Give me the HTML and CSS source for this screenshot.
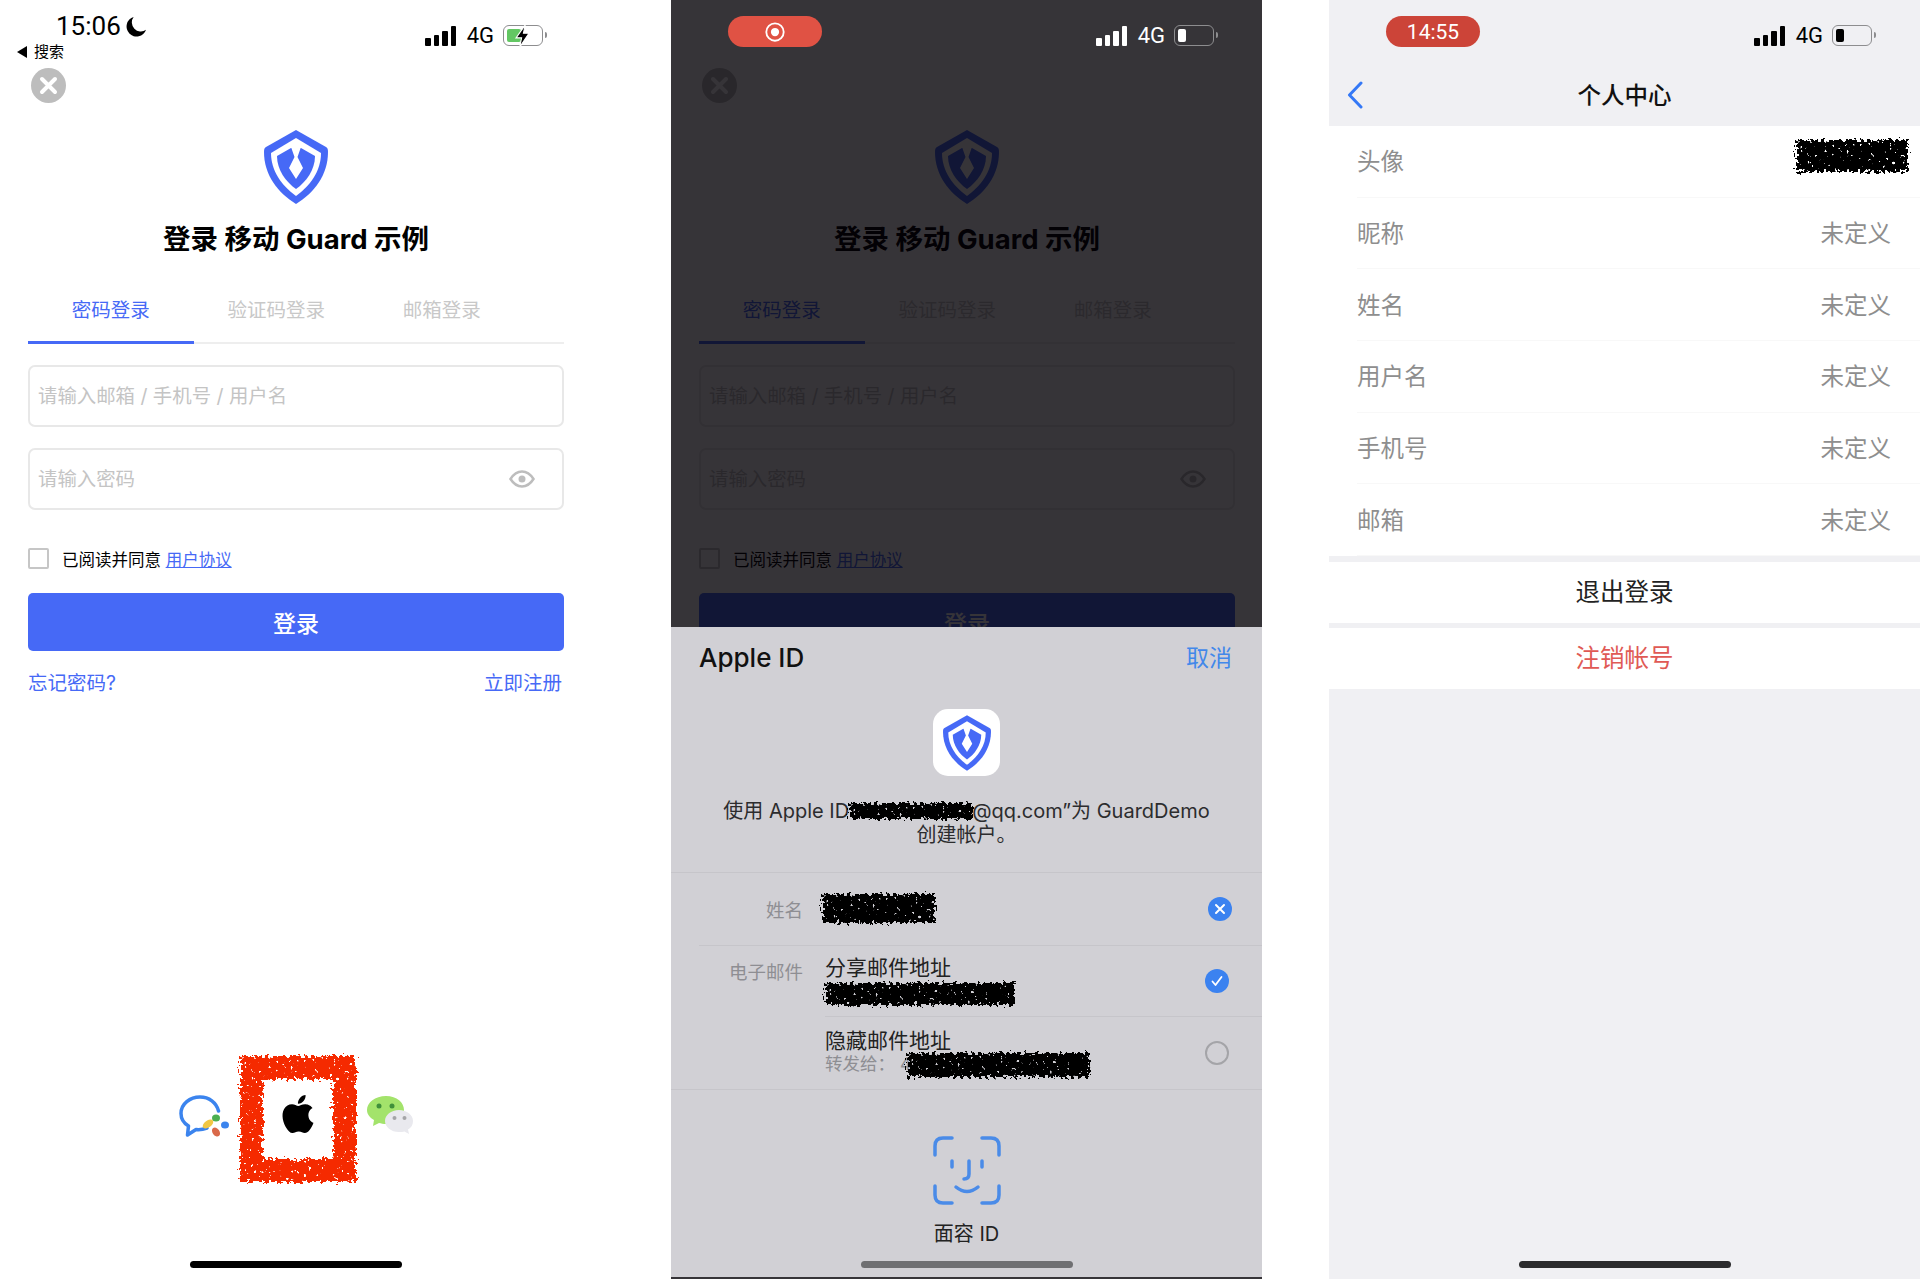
FILE: index.html
```html
<!DOCTYPE html>
<html lang="zh-CN">
<head>
    <meta charset="UTF-8">
    <meta name="viewport" content="width=device-width, initial-scale=1.0">
    <title>移动 Guard 示例</title>
    <link rel="stylesheet" href="styles.css">
</head>
<body>
    <!-- shared drawings -->
    <svg class="defs" width="0" height="0" aria-hidden="true">
        <defs>
            <filter id="scribble" x="-12%" y="-12%" width="124%" height="124%" color-interpolation-filters="sRGB">
                <feTurbulence type="fractalNoise" baseFrequency=".28" numOctaves="2" seed="4" result="noise"/>
                <feDisplacementMap in="SourceGraphic" in2="noise" scale="11" xChannelSelector="R" yChannelSelector="G" result="rough"/>
                <feColorMatrix in="noise" type="matrix" values="0 0 0 0 0  0 0 0 0 0  0 0 0 0 0  0 0 0 -16 5" result="holes"/>
                <feComposite in="rough" in2="holes" operator="out"/>
            </filter>
            <symbol id="shield" viewBox="0 0 64 74">
                <path fill="#4669f6" d="M32 0L62 17C63.500 18 64 19 64 22C64 45 50 63 32 74C14 63 0 45 0 22C0 19 .5 18 2 17Z"/>
                <path fill="#fff" d="M32 8L57 23C57 41 46 56 32 66C18 56 7 41 7 23Z"/>
                <path fill="#4669f6" d="M27 18L13 26C13 40 22 52 32 59C42 52 51 40 51 26L37 18Z"/>
                <path fill="#fff" d="M27 17L32 14L37 17L33.500 27L39 38L32 49L25 38L30.500 27Z"/>
            </symbol>
        </defs>
    </svg>

    <main class="board">
        <!-- login page -->
        <section class="phone">
            <div class="status">
                <div class="status-left">
                    <div class="clock">
                        <span>15:06</span>
                        <svg class="moon" viewBox="0 0 22 22"><path fill="#000" d="M8 1A10.500 10.500 0 1 0 21 14.500A9.500 9.500 0 0 1 8 1Z"/></svg>
                    </div>
                    <div class="back-app"><i class="back-arrow"></i>搜索</div>
                </div>
                <div class="status-right">
                    <div class="signal"><i></i><i></i><i></i><i></i></div>
                    <span class="network">4G</span>
                    <div class="battery">
                        <i class="battery-level battery-charging"></i>
                        <svg class="bolt" viewBox="0 0 18 26"><path fill="#000" stroke="#fff" stroke-width="1.200" d="M12 1L2 15H8L6 25L16 10H10Z"/></svg>
                    </div>
                </div>
            </div>
            <div class="login">
                <svg class="close" viewBox="0 0 35 35"><circle cx="17.500" cy="17.500" r="17.500" fill="#bdbdbd"/><path stroke="#fff" stroke-width="4" stroke-linecap="round" d="M11 11L24 24M24 11L11 24"/></svg>
                <svg class="logo"><use href="#shield"/></svg>
                <h1 class="title">登录 移动 Guard 示例</h1>
                <div class="tabs">
                    <span class="tab tab-active">密码登录</span>
                    <span class="tab">验证码登录</span>
                    <span class="tab">邮箱登录</span>
                </div>
                <div class="input-box"><input type="text" placeholder="请输入邮箱 / 手机号 / 用户名"></div>
                <div class="input-box">
                    <input type="password" placeholder="请输入密码">
                    <svg class="eye" viewBox="0 0 26 18"><path fill="none" stroke="#bdbdbd" stroke-width="2.500" d="M1.500 9C5 3.500 9 1.500 13 1.500S21 3.500 24.500 9C21 14.500 17 16.500 13 16.500S5 14.500 1.500 9Z"/><circle cx="13" cy="9" r="3.500" fill="#bdbdbd"/></svg>
                </div>
                <div class="agree"><i class="check"></i><span>已阅读并同意 <a href="#">用户协议</a></span></div>
                <button class="submit">登录</button>
                <div class="links"><a href="#">忘记密码?</a><a href="#">立即注册</a></div>
                <div class="social">
                    <svg class="wecom" viewBox="0 0 51 42">
                        <path fill="none" stroke="#3b84ee" stroke-width="3.500" stroke-linecap="round" stroke-linejoin="round" d="M28 33C24 34.500 21 35 17 34.500L8.500 40L9.500 31C4.500 28 2 23.500 2 18.500C2 9 11 2 21 2C30 2 37.500 7.500 39.500 16"/>
                        <ellipse cx="37" cy="23" rx="4" ry="3.500" fill="#4caf50"/>
                        <ellipse cx="29" cy="29" rx="3.500" ry="6" fill="#f2c744" transform="rotate(55 29 29)"/>
                        <ellipse cx="46" cy="30" rx="4" ry="3.500" fill="#3b84ee"/>
                        <ellipse cx="37" cy="37" rx="3.500" ry="5" fill="#d9694a" transform="rotate(-35 37 37)"/>
                    </svg>
                    <div class="apple-frame">
                        <div class="frame-paint"></div>
                        <svg class="apple" viewBox="0 0 24 24"><path fill="#000" d="M12.152 6.896c-.948 0-2.415-1.078-3.960-1.040-2.040.027-3.910 1.183-4.961 3.014-2.117 3.675-.546 9.103 1.519 12.090 1.013 1.454 2.208 3.090 3.792 3.039 1.520-.065 2.090-.987 3.935-.987 1.831 0 2.350.987 3.960.948 1.637-.026 2.676-1.480 3.676-2.948 1.156-1.688 1.636-3.325 1.662-3.415-.039-.013-3.182-1.221-3.220-4.857-.026-3.040 2.480-4.494 2.597-4.559-1.429-2.090-3.623-2.324-4.390-2.376-2-.156-3.675 1.090-4.610 1.090zM15.530 3.830c.843-1.012 1.400-2.427 1.245-3.830-1.207.052-2.662.805-3.532 1.818-.780.896-1.454 2.338-1.273 3.714 1.338.104 2.715-.688 3.559-1.701"/></svg>
                    </div>
                    <svg class="wechat" viewBox="0 0 48 40">
                        <path fill="#a3e36b" d="M20 1C31 1 38 7.500 38 15C38 22.500 31 29 20 29C17.500 29 15 28.500 13 28L7 31L8 25C3.500 22.500 1 19 1 15C1 7.500 9 1 20 1Z"/>
                        <circle cx="13" cy="11" r="2.500" fill="#3f8f3a"/><circle cx="26" cy="11" r="2.500" fill="#3f8f3a"/>
                        <path fill="#e9e9ee" d="M33 15C41 15 47 20 47 26C47 30 45 33 42 34.500L43 39L38.500 36.500C37 37 35 37 33 37C25 37 19 32 19 26C19 20 25 15 33 15Z"/>
                        <circle cx="28.500" cy="23" r="2" fill="#a5a5a8"/><circle cx="38.500" cy="23" r="2" fill="#a5a5a8"/>
                    </svg>
                </div>
            </div>
            <div class="home-bar"></div>
        </section>

        <!-- apple id sheet on top of the login page -->
        <section class="phone phone-sheet">
            <div class="status status-over">
                <div class="pill pill-record">
                    <svg class="record" viewBox="0 0 24 24"><circle cx="12" cy="12" r="9.500" fill="none" stroke="#fff" stroke-width="2"/><circle cx="12" cy="12" r="4.500" fill="#fff"/></svg>
                </div>
                <div class="status-right">
                    <div class="signal"><i></i><i></i><i></i><i></i></div>
                    <span class="network">4G</span>
                    <div class="battery"><i class="battery-level"></i></div>
                </div>
            </div>
            <div class="login">
                <svg class="close" viewBox="0 0 35 35"><circle cx="17.500" cy="17.500" r="17.500" fill="#bdbdbd"/><path stroke="#fff" stroke-width="4" stroke-linecap="round" d="M11 11L24 24M24 11L11 24"/></svg>
                <svg class="logo"><use href="#shield"/></svg>
                <h1 class="title">登录 移动 Guard 示例</h1>
                <div class="tabs">
                    <span class="tab tab-active">密码登录</span>
                    <span class="tab">验证码登录</span>
                    <span class="tab">邮箱登录</span>
                </div>
                <div class="input-box"><input type="text" placeholder="请输入邮箱 / 手机号 / 用户名"></div>
                <div class="input-box">
                    <input type="password" placeholder="请输入密码">
                    <svg class="eye" viewBox="0 0 26 18"><path fill="none" stroke="#bdbdbd" stroke-width="2.500" d="M1.500 9C5 3.500 9 1.500 13 1.500S21 3.500 24.500 9C21 14.500 17 16.500 13 16.500S5 14.500 1.500 9Z"/><circle cx="13" cy="9" r="3.500" fill="#bdbdbd"/></svg>
                </div>
                <div class="agree"><i class="check"></i><span>已阅读并同意 <a href="#">用户协议</a></span></div>
                <button class="submit">登录</button>
            </div>
            <div class="scrim"></div>
            <div class="sheet">
                <div class="sheet-head">
                    <span class="sheet-title">Apple ID</span>
                    <span class="sheet-cancel">取消</span>
                </div>
                <div class="app-icon"><svg class="app-shield"><use href="#shield"/></svg></div>
                <p class="sheet-text">使用 Apple ID<span class="scrawl scrawl-mail"></span>@qq.com”为 GuardDemo<br>创建帐户。</p>
                <div class="fields">
                    <div class="field field-name">
                        <span class="field-label">姓名</span>
                        <div class="option">
                            <span class="scrawl scrawl-name"></span>
                            <svg class="mark mark-x" viewBox="0 0 24 24"><circle cx="12" cy="12" r="12" fill="#3b82f0"/><path stroke="#fff" stroke-width="2" stroke-linecap="round" d="M8 8L16 16M16 8L8 16"/></svg>
                        </div>
                    </div>
                    <div class="field">
                        <span class="field-label field-label-top">电子邮件</span>
                        <div class="field-options">
                            <div class="option option-line">
                                <div class="option-text">
                                    <span class="option-title">分享邮件地址</span>
                                    <span class="scrawl scrawl-share"></span>
                                </div>
                                <svg class="mark" viewBox="0 0 24 24"><circle cx="12" cy="12" r="12" fill="#3b82f0"/><path fill="none" stroke="#fff" stroke-width="1.800" stroke-linecap="round" stroke-linejoin="round" d="M7.500 12.500L10.500 16L16.500 8"/></svg>
                            </div>
                            <div class="option">
                                <div class="option-text">
                                    <span class="option-title">隐藏邮件地址</span>
                                    <span class="option-sub">转发给： 4<span class="scrawl scrawl-hide"></span></span>
                                </div>
                                <i class="mark mark-empty"></i>
                            </div>
                        </div>
                    </div>
                </div>
                <div class="face">
                    <svg class="face-icon" viewBox="0 0 68 69"><g fill="none" stroke="#4a8be8" stroke-width="3.500" stroke-linecap="round"><path d="M2 19V10Q2 2 10 2H19M49 2H58Q66 2 66 10V19M2 50V59Q2 67 10 67H19M66 50V59Q66 67 58 67H49"/><path d="M19 25V31M49 25V31M36 25V38Q36 43 31 43M23 51Q34 60 45 51"/></g></svg>
                    <span class="face-label">面容 ID</span>
                </div>
                <div class="home-bar home-bar-grey"></div>
            </div>
        </section>

        <!-- profile page -->
        <section class="phone phone-profile">
            <div class="status">
                <div class="pill pill-time">14:55</div>
                <div class="status-right">
                    <div class="signal"><i></i><i></i><i></i><i></i></div>
                    <span class="network">4G</span>
                    <div class="battery"><i class="battery-level"></i></div>
                </div>
            </div>
            <div class="navbar">
                <svg class="chevron" viewBox="0 0 16 28"><path fill="none" stroke="#3478f6" stroke-width="3" stroke-linecap="round" stroke-linejoin="round" d="M14 2L2.500 14L14 26"/></svg>
                <span class="navbar-title">个人中心</span>
            </div>
            <ul class="profile-list">
                <li class="profile-row"><span>头像</span><span class="scrawl scrawl-avatar"></span></li>
                <li class="profile-row"><span>昵称</span><span>未定义</span></li>
                <li class="profile-row"><span>姓名</span><span>未定义</span></li>
                <li class="profile-row"><span>用户名</span><span>未定义</span></li>
                <li class="profile-row"><span>手机号</span><span>未定义</span></li>
                <li class="profile-row"><span>邮箱</span><span>未定义</span></li>
            </ul>
            <div class="profile-action">退出登录</div>
            <div class="profile-action profile-danger">注销帐号</div>
            <div class="home-bar home-bar-dark"></div>
        </section>
    </main>
</body>
</html>
```

FILE: styles.css
```css
* {
    box-sizing: border-box;
}
body {
    margin: 0;
    background-color: #fff;
    font-family: Inter, 'Noto Sans CJK SC', sans-serif;
    color: #000;
}
a {
    color: #4669f6;
    text-decoration: none;
}
.defs {
    position: absolute;
}
.board {
    display: flex;
    width: 1920px;
    height: 1279px;
    overflow: hidden;
}
.phone {
    position: relative;
    display: flex;
    flex-direction: column;
    flex: 0 0 591px;
    height: 1279px;
    overflow: hidden;
    background-color: #fff;
}
.phone-sheet {
    margin-left: 80px;
}
.phone-profile {
    margin-left: 67px;
    background-color: #f0f0f3;
}

/* status bar */
.status {
    display: flex;
    justify-content: space-between;
    align-items: flex-start;
    flex: 0 0 68px;
    padding-right: 45px;
}
.status-over {
    position: relative;
    z-index: 2;
    color: #fff;
}
.status-left {
    padding: 11px 0 0 17px;
}
.clock {
    display: flex;
    align-items: center;
    gap: 5px;
    height: 30px;
    padding-left: 39px;
    font-size: 26px;
    font-family: Roboto, sans-serif;
}
.moon {
    width: 21px;
    height: 21px;
}
.back-app {
    display: flex;
    align-items: center;
    gap: 7px;
    margin-top: 1px;
    font-size: 15px;
    line-height: 20px;
}
.back-arrow {
    border-right: 10px solid #000;
    border-top: 6px solid transparent;
    border-bottom: 6px solid transparent;
}
.status-right {
    display: flex;
    align-items: center;
    gap: 9px;
    margin-top: 25px;
    height: 21px;
}
.signal {
    display: flex;
    align-items: flex-end;
    gap: 3px;
    height: 20px;
    margin-right: 1.500px;
    color: inherit;
}
.signal i {
    width: 5.500px;
    background-color: currentColor;
    border-radius: 1px;
}
.signal i:nth-child(1) { height: 8px; }
.signal i:nth-child(2) { height: 11px; }
.signal i:nth-child(3) { height: 15px; }
.signal i:nth-child(4) { height: 20px; }
.network {
    font-family: Roboto, sans-serif;
    font-size: 22px;
    line-height: 21px;
}
.battery {
    position: relative;
    width: 40px;
    height: 21px;
    margin-right: 3px;
    padding: 3px;
    border: 1.500px solid #8d8d8f;
    border-radius: 6px;
}
.battery::after {
    content: '';
    position: absolute;
    top: 6px;
    right: -4.500px;
    width: 2px;
    height: 6px;
    background-color: #8d8d8f;
    border-radius: 0 2px 2px 0;
}
.battery-level {
    display: block;
    width: 8px;
    height: 100%;
    background-color: currentColor;
    border-radius: 2px;
}
.battery-charging {
    width: 14px;
    background-color: #63c763;
}
.bolt {
    position: absolute;
    top: -2.500px;
    left: 10px;
    width: 17px;
    height: 24px;
}
.pill {
    display: flex;
    align-items: center;
    justify-content: center;
    width: 94px;
    height: 31px;
    margin-top: 16px;
    margin-left: 57px;
    border-radius: 16px;
    color: #fff;
}
.pill-record {
    background-color: #e05244;
}
.pill-time {
    background-color: #cc4438;
    font-size: 21px;
    font-family: Roboto, sans-serif;
}
.record {
    width: 22px;
    height: 22px;
}

/* login form */
.login {
    display: flex;
    flex-direction: column;
    flex: 1;
    padding: 0 27px 97px 28px;
}
.close {
    width: 35px;
    height: 35px;
    margin-left: 3px;
    flex: none;
}
.logo {
    align-self: center;
    flex: none;
    width: 64px;
    height: 74px;
    margin-top: 27px;
}
.title {
    margin: 15px 0 0;
    text-align: center;
    font-size: 27.500px;
    line-height: 40px;
    font-weight: 700;
}
.tabs {
    display: flex;
    margin-top: 17px;
    border-bottom: 2px solid #eeeeee;
}
.tab {
    width: 165.500px;
    height: 68px;
    margin-bottom: -2px;
    text-align: center;
    font-size: 19.500px;
    line-height: 68px;
    color: #c8c8c8;
}
.tab-active {
    color: #4669f6;
    border-bottom: 3px solid #4669f6;
}
.input-box {
    display: flex;
    align-items: center;
    height: 62px;
    margin-top: 21px;
    padding: 0 27px 0 8px;
    border: 2px solid #e8e8e8;
    border-radius: 7px;
}
.input-box:first-of-type {
    margin-top: 22px;
}
.input-box input {
    flex: 1;
    border: none;
    outline: none;
    padding: 0;
    background: transparent;
    font-family: inherit;
    font-size: 19.400px;
}
.input-box input::placeholder {
    color: #c4c4c4;
}
.eye {
    width: 26px;
    height: 18px;
}
.agree {
    display: flex;
    align-items: center;
    gap: 13px;
    margin-top: 38px;
    height: 21px;
    font-size: 16.500px;
}
.agree a {
    text-decoration: underline;
}
.check {
    width: 21px;
    height: 21px;
    border: 2.500px solid #c6c6c6;
    border-radius: 2px;
}
.submit {
    flex: none;
    height: 58px;
    margin-top: 23.500px;
    border: none;
    border-radius: 5px;
    background-color: #4669f6;
    color: #fff;
    font-family: inherit;
    font-size: 23px;
    font-weight: 500;
}
.links {
    display: flex;
    justify-content: space-between;
    margin-top: 18px;
    padding-right: 2px;
    font-size: 19.500px;
    line-height: 28px;
}
.social {
    display: flex;
    align-items: center;
    justify-content: center;
    gap: 10px;
    margin-top: auto;
}
.wecom {
    width: 51px;
    height: 42px;
    margin-bottom: 6px;
}
.apple-frame {
    position: relative;
    display: flex;
    align-items: center;
    justify-content: center;
    width: 116px;
    height: 126px;
}
.frame-paint {
    position: absolute;
    inset: 0;
    border: 23px solid #f52a00;
    filter: url(#scribble);
}
.apple {
    width: 38px;
    height: 42px;
    margin-bottom: 10px;
}
.wechat {
    width: 48px;
    height: 40px;
    margin-bottom: 8px;
}
.home-bar {
    position: absolute;
    left: 190px;
    bottom: 11px;
    width: 212px;
    height: 7px;
    border-radius: 4px;
    background-color: #000;
}
.home-bar-grey {
    bottom: 9px;
    background-color: #6f6f72;
}
.home-bar-dark {
    background-color: #2c2c2e;
}

/* apple id sheet */
.scrim {
    position: absolute;
    inset: 0;
    z-index: 1;
    background-color: rgba(4, 1, 6, .8);
}
.sheet {
    position: absolute;
    top: 627px;
    left: 0;
    right: 0;
    z-index: 2;
    height: 650px;
    background-color: #d1d0d5;
    color: #222;
}
.sheet-head {
    display: flex;
    justify-content: space-between;
    align-items: center;
    height: 60px;
    padding: 0 30px 0 28px;
}
.sheet-title {
    font-size: 26px;
    font-weight: 500;
    color: #111;
}
.sheet-cancel {
    padding-bottom: 2px;
    font-size: 23px;
    color: #4288ea;
}
.app-icon {
    display: flex;
    align-items: center;
    justify-content: center;
    width: 67px;
    height: 67px;
    margin: 22px auto 0;
    border-radius: 15px;
    background-color: #fff;
}
.app-shield {
    width: 48px;
    height: 56px;
}
.sheet-text {
    margin: 23px 0 25px;
    text-align: center;
    font-size: 20px;
    line-height: 24px;
    color: #2c2c2e;
}
.scrawl {
    display: inline-block;
    background-color: #000;
    filter: url(#scribble);
}
.scrawl-mail {
    width: 123px;
    height: 16px;
    vertical-align: -1px;
}
.fields {
    border-top: 1px solid #c6c5ca;
    border-bottom: 1px solid #c6c5ca;
}
.field {
    display: flex;
    margin-left: 28px;
    font-size: 18.500px;
}
.field-name {
    border-bottom: 1px solid #c6c5ca;
}
.field-label {
    flex: 0 0 104px;
    align-self: center;
    text-align: right;
    color: #8e8e93;
}
.field-label-top {
    align-self: flex-start;
    margin-top: 12px;
}
.field-options {
    flex: 1;
}
.option {
    display: flex;
    justify-content: space-between;
    align-items: center;
    flex: 1;
    height: 71.500px;
    margin-left: 22px;
    padding-right: 33px;
}
.option-line {
    border-bottom: 1px solid #c6c5ca;
}
.scrawl-name {
    width: 113px;
    height: 29px;
    margin-left: -3px;
}
.option-text {
    display: flex;
    flex-direction: column;
}
.option-title {
    font-size: 21px;
    line-height: 24px;
}
.option-sub {
    display: flex;
    font-size: 17.500px;
    line-height: 22px;
    color: #8e8e93;
}
.scrawl-share {
    width: 190px;
    height: 22px;
    margin-top: 3px;
}
.scrawl-hide {
    width: 182px;
    height: 24px;
    margin-left: -4px;
}
.mark {
    width: 24px;
    height: 24px;
    flex: none;
}
.mark-x {
    margin-right: -3px;
}
.mark-empty {
    border: 2px solid #a4a4a8;
    border-radius: 50%;
}
.face {
    display: flex;
    flex-direction: column;
    align-items: center;
    margin-top: 46px;
}
.face-icon {
    width: 68px;
    height: 69px;
}
.face-label {
    margin-top: 16px;
    font-size: 20px;
    line-height: 26px;
}

/* profile page */
.navbar {
    position: relative;
    display: flex;
    align-items: center;
    justify-content: center;
    height: 58px;
    padding-bottom: 6px;
}
.navbar-title {
    font-size: 23.500px;
    font-weight: 500;
    color: #111;
}
.chevron {
    position: absolute;
    left: 18px;
    top: 13px;
    width: 16px;
    height: 28px;
}
.profile-list {
    margin: 0;
    padding: 0;
    list-style: none;
    background-color: #fff;
}
.profile-row {
    display: flex;
    justify-content: space-between;
    align-items: center;
    height: 71.670px;
    margin-left: 28px;
    padding-right: 29px;
    padding-bottom: 2px;
    border-bottom: 1px solid #f8f8f8;
    font-size: 23.500px;
    color: #8e8e8e;
}
.scrawl-avatar {
    width: 112px;
    height: 32px;
    margin-right: -17px;
    margin-top: -8px;
}
.profile-action {
    display: flex;
    align-items: center;
    justify-content: center;
    height: 61px;
    margin-top: 5px;
    padding-bottom: 3px;
    background-color: #fff;
    font-size: 24.500px;
    color: #222;
}
.profile-list + .profile-action {
    margin-top: 6px;
}
.profile-danger {
    color: #e05a55;
}
```
